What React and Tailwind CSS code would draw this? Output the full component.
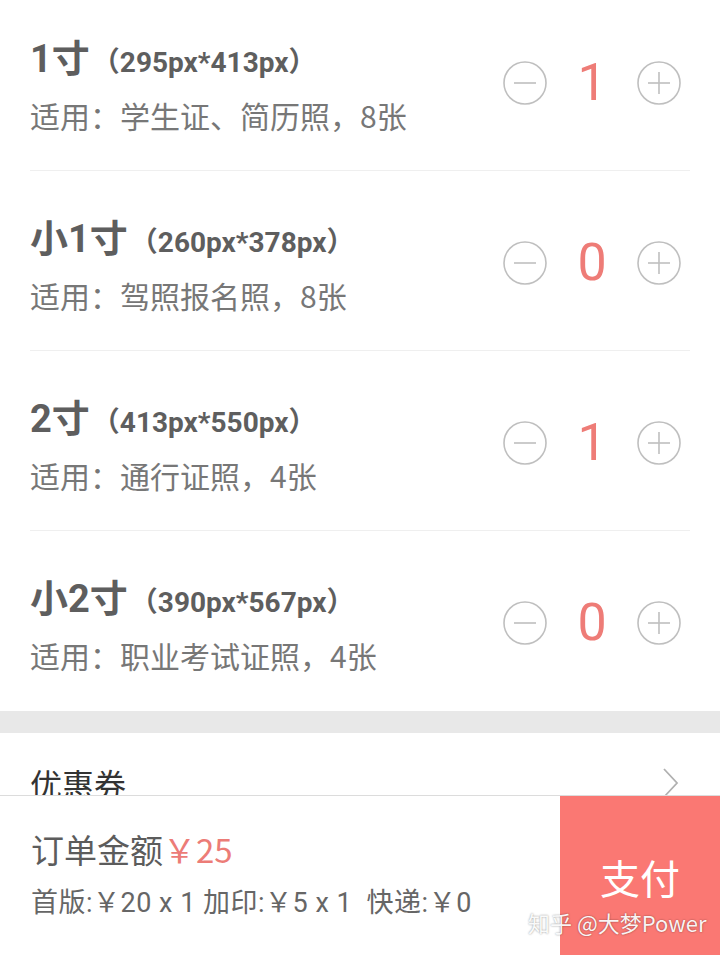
import React from "react";

const items = [
  { name: "1寸", size: "295px*413px", use: "学生证、简历照，8张", qty: 1 },
  { name: "小1寸", size: "260px*378px", use: "驾照报名照，8张", qty: 0 },
  { name: "2寸", size: "413px*550px", use: "通行证照，4张", qty: 1 },
  { name: "小2寸", size: "390px*567px", use: "职业考试证照，4张", qty: 0 },
];

function Minus() {
  return (
    <svg width="44" height="44" viewBox="0 0 44 44" className="shrink-0">
      <circle cx="22" cy="22" r="21" fill="none" stroke="#bfbfbf" strokeWidth="1.6" />
      <line x1="11" y1="22" x2="33" y2="22" stroke="#bfbfbf" strokeWidth="1.6" />
    </svg>
  );
}

function Plus() {
  return (
    <svg width="44" height="44" viewBox="0 0 44 44" className="shrink-0">
      <circle cx="22" cy="22" r="21" fill="none" stroke="#bfbfbf" strokeWidth="1.6" />
      <line x1="11" y1="22" x2="33" y2="22" stroke="#bfbfbf" strokeWidth="1.6" />
      <line x1="22" y1="11" x2="22" y2="33" stroke="#bfbfbf" strokeWidth="1.6" />
    </svg>
  );
}

export default function App() {
  return (
    <div className="relative w-[720px] h-[955px] overflow-hidden bg-white font-['Roboto','Noto_Sans_CJK_SC',sans-serif]">
      <div className="-mt-[9px]">
        {items.map((it, i) => (
          <div
            key={i}
            className={`mx-[30px] h-[180px] flex items-start justify-between ${i < 3 ? "border-b border-[#efefef]" : ""}`}
          >
            <div className="pt-[46px] flex flex-col">
              <div className="flex items-baseline leading-[44px] text-[#5e5e5e] font-bold">
                <span className="text-[38px]">{it.name}</span>
                <span className="text-[28px] ml-[2px]">（{it.size}）</span>
              </div>
              <div className="mt-[10px] leading-[40px] text-[30px] text-[#777777] font-['Noto_Sans_CJK_SC',sans-serif]">
                适用：{it.use}
              </div>
            </div>
            <div className="mt-[70px] mr-[9px] flex items-center">
              <Minus />
              <div className="w-[90px] text-center text-[52px] leading-[44px] text-[#ee7c77] font-['Roboto',sans-serif]">
                {it.qty}
              </div>
              <Plus />
            </div>
          </div>
        ))}
      </div>

      <div className="h-[22px] bg-[#e8e8e8]" />

      <div className="h-[100px] px-[30px] flex items-center justify-between">
        <span className="text-[32px] text-[#333333] font-['Noto_Sans_CJK_SC',sans-serif]">优惠券</span>
        <svg width="18" height="32" viewBox="0 0 18 32" className="mr-[10px]">
          <path d="M2 2 L15 16 L2 30" fill="none" stroke="#b0b0b0" strokeWidth="1.8" />
        </svg>
      </div>

      <div className="absolute left-0 right-0 bottom-0 h-[160px] bg-white border-t border-[#dcdcdc] flex">
        <div className="flex-1 pl-[31px] pt-[31px] flex flex-col">
          <div className="leading-[44px] text-[33px] text-[#5c5c5c] font-['Noto_Sans_CJK_SC',sans-serif]">
            订单金额<span className="text-[#ec7c77]">￥25</span>
          </div>
          <div className="mt-[14px] leading-[36px] text-[27px] tracking-[0.5px] text-[#666666] font-['Roboto','Noto_Sans_CJK_SC',sans-serif] whitespace-pre">
            首版:￥20 x 1 加印:￥5 x 1  快递:￥0
          </div>
        </div>
        <div className="w-[160px] bg-[#fa7873] flex items-center justify-center pt-[2px]">
          <span className="text-[40px] text-white font-['Noto_Sans_CJK_SC',sans-serif]">支付</span>
        </div>
      </div>

      <div className="absolute left-[528px] top-[907px] text-[22px] leading-[30px] text-white/95 font-['Noto_Sans_CJK_SC',sans-serif] [text-shadow:0_0_2px_rgba(0,0,0,0.45)] whitespace-pre">
        知乎 @大梦Power
      </div>
    </div>
  );
}
